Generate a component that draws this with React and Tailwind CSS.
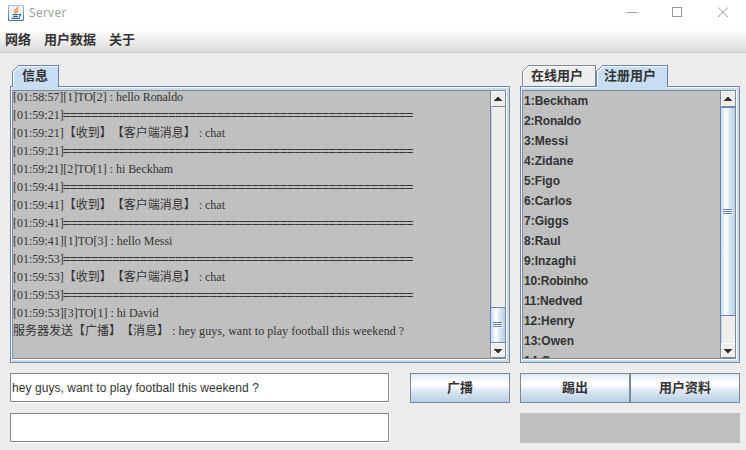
import React from "react";

const CJK = "font-['Liberation_Sans','Noto_Sans_CJK_SC',sans-serif]";
const SEP = "=".repeat(50);

const log = [
  ["[01:58:57][1]TO[2] : hello Ronaldo"],
  ["[01:59:21]", SEP],
  ["[01:59:21]", "【收到】【客户端消息】", " : chat"],
  ["[01:59:21]", SEP],
  ["[01:59:21][2]TO[1] : hi Beckham"],
  ["[01:59:41]", SEP],
  ["[01:59:41]", "【收到】【客户端消息】", " : chat"],
  ["[01:59:41]", SEP],
  ["[01:59:41][1]TO[3] : hello Messi"],
  ["[01:59:53]", SEP],
  ["[01:59:53]", "【收到】【客户端消息】", " : chat"],
  ["[01:59:53]", SEP],
  ["[01:59:53][3]TO[1] : hi David"],
  ["服务器发送【广播】【消息】", " : hey guys, want to play football this weekend ?"],
];

const users = ["Beckham", "Ronaldo", "Messi", "Zidane", "Figo", "Carlos", "Giggs", "Raul", "Inzaghi", "Robinho", "Nedved", "Henry", "Owen", "G"];

const userTracking = {
  Ronaldo: "tracking-[-0.2px]",
  Robinho: "tracking-[-0.2px]",
  Nedved: "tracking-[-0.2px]",
  Henry: "tracking-[-0.1px]",
};

function partTracking(text) {
  if (text === SEP) return "-ml-px mt-px text-[14px] font-bold tracking-[-0.98px]";
  if (text.endsWith("?")) return "tracking-[0.06px]";
  if (text.endsWith("Ronaldo") || text.endsWith("Beckham")) return "tracking-[-0.04px]";
  return "";
}

function JavaIcon() {
  return (
    <svg width="16" height="16" viewBox="0 0 16 16" className="shrink-0">
      <defs>
        <linearGradient id="jb" x1="0" y1="0" x2="0" y2="1">
          <stop offset="0" stopColor="#a9bdcb" />
          <stop offset="1" stopColor="#3f739b" />
        </linearGradient>
      </defs>
      <rect x="0.5" y="0.5" width="15" height="15" rx="0.5" fill="#eef2f5" stroke="url(#jb)" />
      <path d="M9.500 1.800C10 4 6.500 4.500 6.500 6.200C6.500 7.200 7.500 7.500 7.700 8.500M10.500 4.500C8.500 5.500 9.500 6.500 8.500 8" fill="none" stroke="#e07a2c" strokeWidth="1.2" />
      <path d="M4.500 9.500H10.500M5 11.300H10M3.500 13.300H12M11 9.300C13.500 8.800 13 11 11 11.500" fill="none" stroke="#3d688a" strokeWidth="1.2" />
    </svg>
  );
}

function Tab({ label, selected, width, cut, inset }) {
  const bottom = selected ? 23 : 21;
  return (
    <div className={`relative h-[21px] shrink-0 ${width}`}>
      <svg className="absolute left-0 top-0 overflow-visible" width={cut} height="23" shapeRendering="crispEdges">
        <path d={`M1 ${bottom}V6L6 1H${cut - 1}V${bottom}Z`} fill={selected ? "#c8ddf2" : "#eeeeee"} />
        <path d={`M1.500 21V7L7 1.500H${cut - 1}`} fill="none" stroke="#fff" />
        <path d={`M.5 21.500V6.500L6.500 .5H${cut - 0.5}V21.500`} fill="none" stroke={selected ? "#6382bf" : "#7a8a99"} />
      </svg>
      <span className={`absolute top-px whitespace-nowrap text-[13px] font-bold leading-[20px] text-[#333] ${inset} ${CJK}`}>{label}</span>
    </div>
  );
}

function Grip() {
  return (
    <svg width="10" height="6" shapeRendering="crispEdges">
      <path d="M0 .5H9M0 2.500H9M0 4.500H9" stroke="#6382bf" />
      <path d="M1 1.500H10M1 3.500H10M1 5.500H10" stroke="#fff" />
    </svg>
  );
}

function ScrollBar({ before, thumb }) {
  return (
    <div className="flex w-[15px] shrink-0 flex-col border-l border-[#7a8a99] bg-[#eee]">
      <div className="flex h-[16px] shrink-0 items-center border-b border-l border-t border-b-[#7a8a99] border-l-white border-t-white pl-[2px]">
        <svg width="8" height="4" shapeRendering="crispEdges" fill="#333"><path d="M3 0h2v1h1v1h1v1h1v1H0V3h1V2h1V1h1z" /></svg>
      </div>
      <div className={`shrink-0 border-l border-[#b8cfe5] ${before}`} />
      <div className={`-ml-px flex shrink-0 items-center justify-center border border-r-0 border-[#6382bf] bg-[linear-gradient(90deg,#c8ddf2,#ffffff_35%,#dde8f3_60%,#b8cfe5)] ${thumb}`}>
        <Grip />
      </div>
      <div className="min-h-0 flex-1 border-l border-[#b8cfe5]" />
      <div className="flex h-[15px] shrink-0 items-center border-b border-l border-t border-b-[#7a8a99] border-l-white border-t-white pl-[2px]">
        <svg width="8" height="4" shapeRendering="crispEdges" fill="#333"><path d="M0 0h8v1H7v1H6v1H5v1H3V3H2V2H1V1H0z" /></svg>
      </div>
    </div>
  );
}

function Pane({ children, scroll }) {
  return (
    <div className="h-[277px] border border-b-[#7a8a99] border-l-[#6382bf] border-r-[#7a8a99] border-t-[#6382bf] bg-[#c8ddf2]">
      <div className="h-full border-l border-t border-white pb-[2px] pr-[2px] pt-[2px]">
        <div className="h-full border-b border-r border-white">
          <div className="flex h-full border border-[#7a8a99] bg-[#c0c0c0]">
            <div className="min-w-0 flex-1 overflow-hidden">{children}</div>
            {scroll}
          </div>
        </div>
      </div>
    </div>
  );
}

function Field({ children }) {
  return (
    <div className="h-[30px] w-[380px] border-b border-r border-white">
      <div className="h-full border border-[#7a8a99] bg-white pl-px text-[12px] leading-[28px] tracking-[0.06px] text-[#333] font-['Liberation_Sans',sans-serif]">{children}</div>
    </div>
  );
}

function Button({ children, width }) {
  return (
    <button className={`h-[30px] border border-[#7a8a99] bg-[linear-gradient(180deg,#dde8f3_0%,#ffffff_30%,#ffffff_38%,#dde8f3_60%,#b8cfe5_100%)] text-center text-[13px] font-bold leading-[28px] text-[#333] ${CJK} ${width}`}>{children}</button>
  );
}

export default function App() {
  return (
    <div className="h-[450px] w-[746px] overflow-hidden bg-[#ededed] text-[#333]">
      <div className="flex h-[30px] items-start bg-white pl-[8px]">
        <div className="flex h-[25px] items-center gap-[5px]">
          <JavaIcon />
          <span className="text-[12px] tracking-[0.3px] text-[#999] font-['Open_Sans',sans-serif]">Server</span>
        </div>
        <svg className="ml-auto mr-[17px] mt-[7px]" width="102" height="11" fill="none" stroke="#999">
          <path d="M0 5.500H10M45.500 .5H54.500V9.500H45.500Z" shapeRendering="crispEdges" />
          <path d="M91 .5L101 10M101 .5L91 10" />
        </svg>
      </div>
      <div className={`flex h-[23px] gap-[13px] border-b border-[#ccc] bg-[linear-gradient(180deg,#ffffff,#dadada)] pl-[5px] text-[13px] font-bold leading-[19px] ${CJK}`}>
        <span>网络</span><span>用户数据</span><span>关于</span>
      </div>
      <div className="flex gap-[10px] pl-[10px] pt-[12px]">
        <div className="w-[500px] shrink-0">
          <div className="relative flex pl-[2px]"><Tab label="信息" selected width="w-[47px]" cut={47} inset="left-[10px]" /></div>
          <Pane scroll={<ScrollBar before="h-[200px]" thumb="h-[36px]" />}>
            <div className="-mt-[3px] text-[12px] [text-spacing-trim:space-all] font-['Liberation_Serif','Noto_Sans_CJK_SC',serif]">
              {log.map((parts, i) => (
                <div key={i} className="flex h-[18px] whitespace-pre leading-[18px]">
                  {parts.map((p, j) => (
                    <span key={j} className={`leading-[18px] ${partTracking(p)}`}>{p}</span>
                  ))}
                </div>
              ))}
            </div>
          </Pane>
          <div className="mt-[10px] flex justify-between">
            <Field>hey guys, want to play football this weekend ?</Field>
            <Button width="w-[100px]">广播</Button>
          </div>
          <div className="mt-[10px]"><Field /></div>
        </div>
        <div className="w-[220px] shrink-0">
          <div className="relative flex pl-[2px]">
            <Tab label="在线用户" width="w-[74px]" cut={74} inset="left-[9px]" />
            <Tab label="注册用户" selected width="w-[72px]" cut={72} inset="left-[8px]" />
          </div>
          <Pane scroll={<ScrollBar before="h-0" thumb="h-[209px]" />}>
            <div className="pl-px text-[12px] font-bold font-['Liberation_Sans',sans-serif]">
              {users.map((u, i) => <div key={u} className={`h-[20px] leading-[20px] ${userTracking[u] || ""}`}>{i + 1}:{u}</div>)}
            </div>
          </Pane>
          <div className="mt-[10px] flex">
            <Button width="w-[110px]">踢出</Button>
            <Button width="w-[110px]">用户资料</Button>
          </div>
          <div className="mt-[10px] h-[30px] bg-[#c0c0c0]" />
        </div>
      </div>
    </div>
  );
}
